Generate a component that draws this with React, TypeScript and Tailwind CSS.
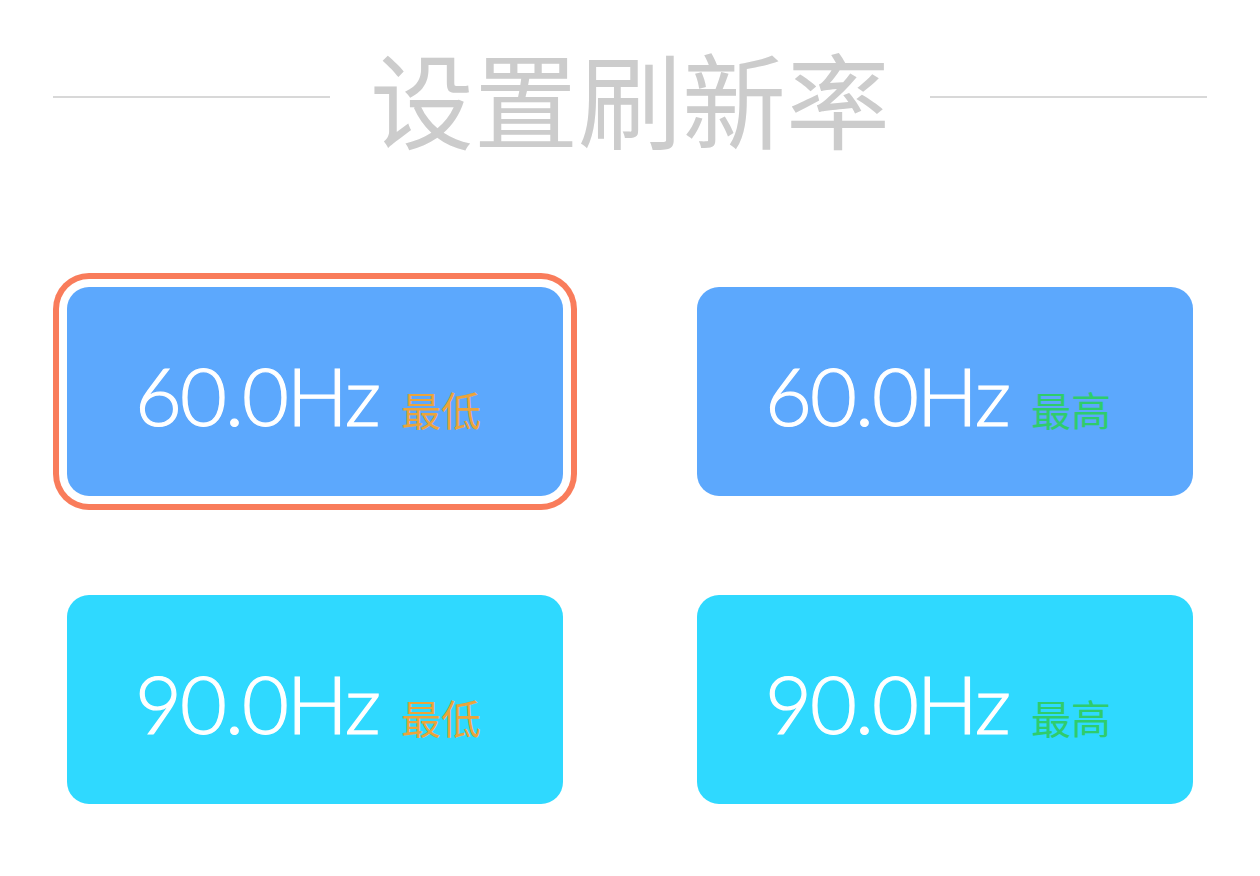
const modes = [
  { rate: "60.0Hz", tag: "最低", bg: "bg-[#5ca8fd]", tagColor: "text-[#eba43a]", active: true },
  { rate: "60.0Hz", tag: "最高", bg: "bg-[#5ca8fd]", tagColor: "text-[#2fcc6c]", active: false },
  { rate: "90.0Hz", tag: "最低", bg: "bg-[#2fd9ff]", tagColor: "text-[#eba43a]", active: false },
  { rate: "90.0Hz", tag: "最高", bg: "bg-[#2fd9ff]", tagColor: "text-[#2fcc6c]", active: false },
];

function ModeCard({ rate, tag, bg, tagColor, active }: (typeof modes)[number]) {
  return (
    <button
      className={`h-[209px] w-[496px] rounded-[22px] ${bg} flex items-center justify-center pr-[14px] ${
        active ? "ring-[6px] ring-[#f97c5b] ring-offset-[8px] ring-offset-white" : ""
      }`}
    >
      <span className="flex items-baseline gap-[22px] mt-[6px]">
        <span className="text-[81px] leading-none text-white font-['Lato',sans-serif] font-light tracking-[-2px] [-webkit-text-stroke:1.2px_white]">
          {rate}
        </span>
        <span className={`text-[40px] leading-none ${tagColor} font-['Noto_Sans_CJK_SC',sans-serif]`}>
          {tag}
        </span>
      </span>
    </button>
  );
}

export default function App() {
  return (
    <div className="w-[1260px] h-[876px] bg-white pt-[45px] font-['Noto_Sans_CJK_SC',sans-serif]">
      <div className="flex items-center px-[53px] gap-[40px]">
        <div className="flex-1 h-[2px] bg-[#d8d8d8]" />
        <h1 className="text-[104px] leading-none text-[#cccccc] font-normal">设置刷新率</h1>
        <div className="flex-1 h-[2px] bg-[#d8d8d8]" />
      </div>

      <div className="mt-[138px] grid grid-cols-[496px_496px] gap-x-[134px] gap-y-[99px] pl-[67px]">
        {modes.map((m, i) => (
          <ModeCard key={i} {...m} />
        ))}
      </div>
    </div>
  );
}
